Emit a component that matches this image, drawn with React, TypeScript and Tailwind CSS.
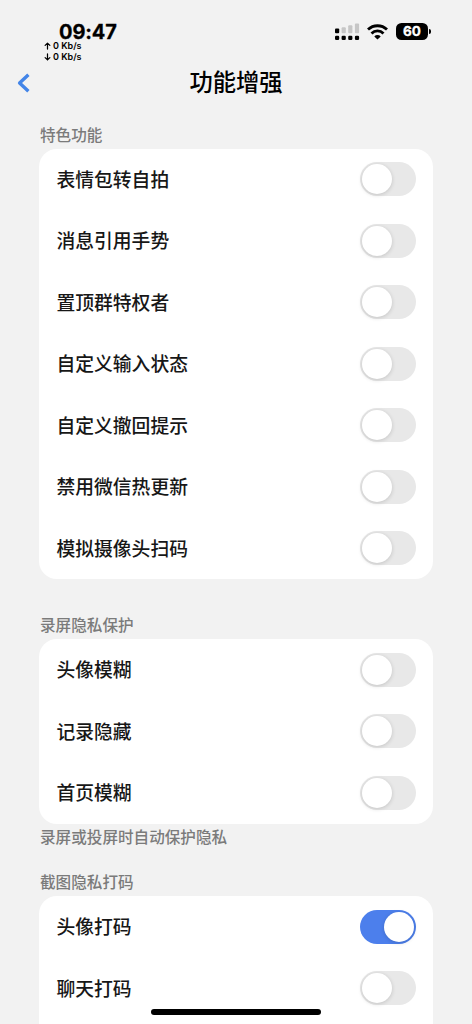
import { useState } from 'react';

interface ToggleItem {
  label: string;
  enabled?: boolean;
}

interface SectionData {
  title: string;
  items: ToggleItem[];
  footer?: string;
  continued?: boolean;
}

const sections: SectionData[] = [
  {
    title: '特色功能',
    items: [
      { label: '表情包转自拍' },
      { label: '消息引用手势' },
      { label: '置顶群特权者' },
      { label: '自定义输入状态' },
      { label: '自定义撤回提示' },
      { label: '禁用微信热更新' },
      { label: '模拟摄像头扫码' },
    ],
  },
  {
    title: '录屏隐私保护',
    items: [{ label: '头像模糊' }, { label: '记录隐藏' }, { label: '首页模糊' }],
    footer: '录屏或投屏时自动保护隐私',
  },
  {
    title: '截图隐私打码',
    items: [{ label: '头像打码', enabled: true }, { label: '聊天打码' }],
    continued: true,
  },
];

const StatusBar = () => (
  <div className="flex h-[62px] items-start justify-between pl-[44px] pr-[41px] font-['Inter','Liberation_Sans',sans-serif] text-black">
    <div className="pt-[24px]">
      <div className="pl-[15px] text-[20px] font-bold leading-[17px] tracking-[-0.1px] [-webkit-text-stroke:0.3px_black]">09:47</div>
      {/* Network speed */}
      <div className="text-[9px] font-semibold leading-[10.8px]">
        {['M4 8V1.2M1.3 3.8L4 1.2l2.7 2.6', 'M4 1v6.8M1.3 5.2L4 7.8l2.7-2.6'].map((d) => (
          <div key={d} className="flex items-center gap-[2px]">
            <svg className="h-[8px] w-[7px]" viewBox="0 0 8 9" fill="none" stroke="currentColor" strokeWidth="1.4" strokeLinecap="round" strokeLinejoin="round">
              <path d={d} />
            </svg>
            <span>0 Kb/s</span>
          </div>
        ))}
      </div>
    </div>

    <div className="flex items-center pt-[23px]">
      {/* Dual SIM signal */}
      <svg className="h-[17px] w-[25px]" viewBox="0 0 25 17">
        <rect x="0" y="5.4" width="4.2" height="4.9" rx="1" />
        <g fill="#c6c6c6">
          <rect x="6.6" y="4.2" width="4.2" height="6.1" rx="1" />
          <rect x="13.2" y="2.3" width="4.2" height="8" rx="1" />
          <rect x="19.9" y="0.4" width="4.2" height="9.9" rx="1" />
        </g>
        <rect x="0" y="12.7" width="4.2" height="4.2" rx="1.2" />
        <rect x="6.6" y="12.7" width="4.2" height="4.2" rx="1.2" />
        <rect x="13.2" y="12.7" width="4.2" height="4.2" rx="1.2" />
        <rect x="19.9" y="12.7" width="4.2" height="4.2" rx="1.2" />
      </svg>
      <svg className="ml-[7px] h-[16px] w-[21px]" viewBox="0 0 21 16" fill="none" stroke="currentColor" strokeWidth="2.8">
        <path d="M1 5.6a13.6 13.6 0 0 1 19 0" />
        <path d="M4.5 9.4a8.5 8.5 0 0 1 12 0" />
        <path d="M7.3 12.4a4.6 4.6 0 0 1 6.4 0L10.5 15.6z" fill="currentColor" stroke="none" />
      </svg>
      <div className="ml-[8px] flex h-[17px] w-[32px] items-center justify-center rounded-[5.5px] bg-black text-[13.5px] font-bold leading-none text-white [-webkit-text-stroke:0.3px_white]">
        60
      </div>
      <div className="ml-px h-[5px] w-[2px] rounded-r-full bg-black" />
    </div>
  </div>
);

const Toggle = ({ checked, onChange }: { checked: boolean; onChange: () => void }) => (
  <button
    role="switch"
    aria-checked={checked}
    onClick={onChange}
    className={`flex h-[34px] w-[56px] shrink-0 items-center rounded-full px-[2px] ${checked ? 'justify-end bg-[#4c7fec]' : 'justify-start bg-[#e8e8e8]'}`}
  >
    <span className="h-[30px] w-[30px] rounded-full bg-white shadow-[0_1px_4px_rgba(0,0,0,0.16)]" />
  </button>
);

const ToggleRow = ({ item }: { item: ToggleItem }) => {
  const [checked, setChecked] = useState(Boolean(item.enabled));

  return (
    <div className="flex h-[61.5px] items-center justify-between pl-[17.5px] pr-[17px]">
      <span className="pb-px text-[18.8px] font-medium leading-[28px] text-[#171717]">{item.label}</span>
      <Toggle checked={checked} onChange={() => setChecked(!checked)} />
    </div>
  );
};

const Section = ({ section }: { section: SectionData }) => (
  <section>
    <h2 className="h-[25px] pl-px text-[15.6px] font-medium leading-[20px] text-[#7b7b7b]">{section.title}</h2>
    <div className={`bg-white ${section.continued ? 'rounded-t-[18px] pb-5' : 'rounded-[18px]'}`}>
      {section.items.map((item) => (
        <ToggleRow key={item.label} item={item} />
      ))}
    </div>
    {section.footer ? (
      <p className="h-[47.5px] pl-px pt-[3px] text-[15.6px] font-medium leading-[19px] text-[#7b7b7b]">{section.footer}</p>
    ) : (
      <div className="h-[35px]" />
    )}
  </section>
);

const App = () => (
  <div className="relative h-[1024px] w-[472px] overflow-hidden bg-[#f2f2f2] font-['Noto_Sans_CJK_SC',sans-serif]">
    <StatusBar />
    <header className="grid h-[40px] grid-cols-[60px_1fr_60px] items-center">
      <button aria-label="返回" className="pl-[17px] pt-px text-[#4385e8]">
        <svg className="h-[20px] w-[13px]" viewBox="0 0 13 20" fill="none" stroke="currentColor" strokeWidth="3.4" strokeLinejoin="round">
          <path d="M11.4 1.8L2.6 10l8.8 8.2" />
        </svg>
      </button>
      <h1 className="pb-[2px] text-center text-[23.3px] font-medium leading-[38px] text-black">功能增强</h1>
    </header>
    <main className="px-[39px] pt-[21.5px]">
      {sections.map((section) => (
        <Section key={section.title} section={section} />
      ))}
    </main>
    {/* Home indicator */}
    <div className="absolute bottom-[9px] left-[151px] h-[6px] w-[170px] rounded-full bg-black" />
  </div>
);

export default App;
